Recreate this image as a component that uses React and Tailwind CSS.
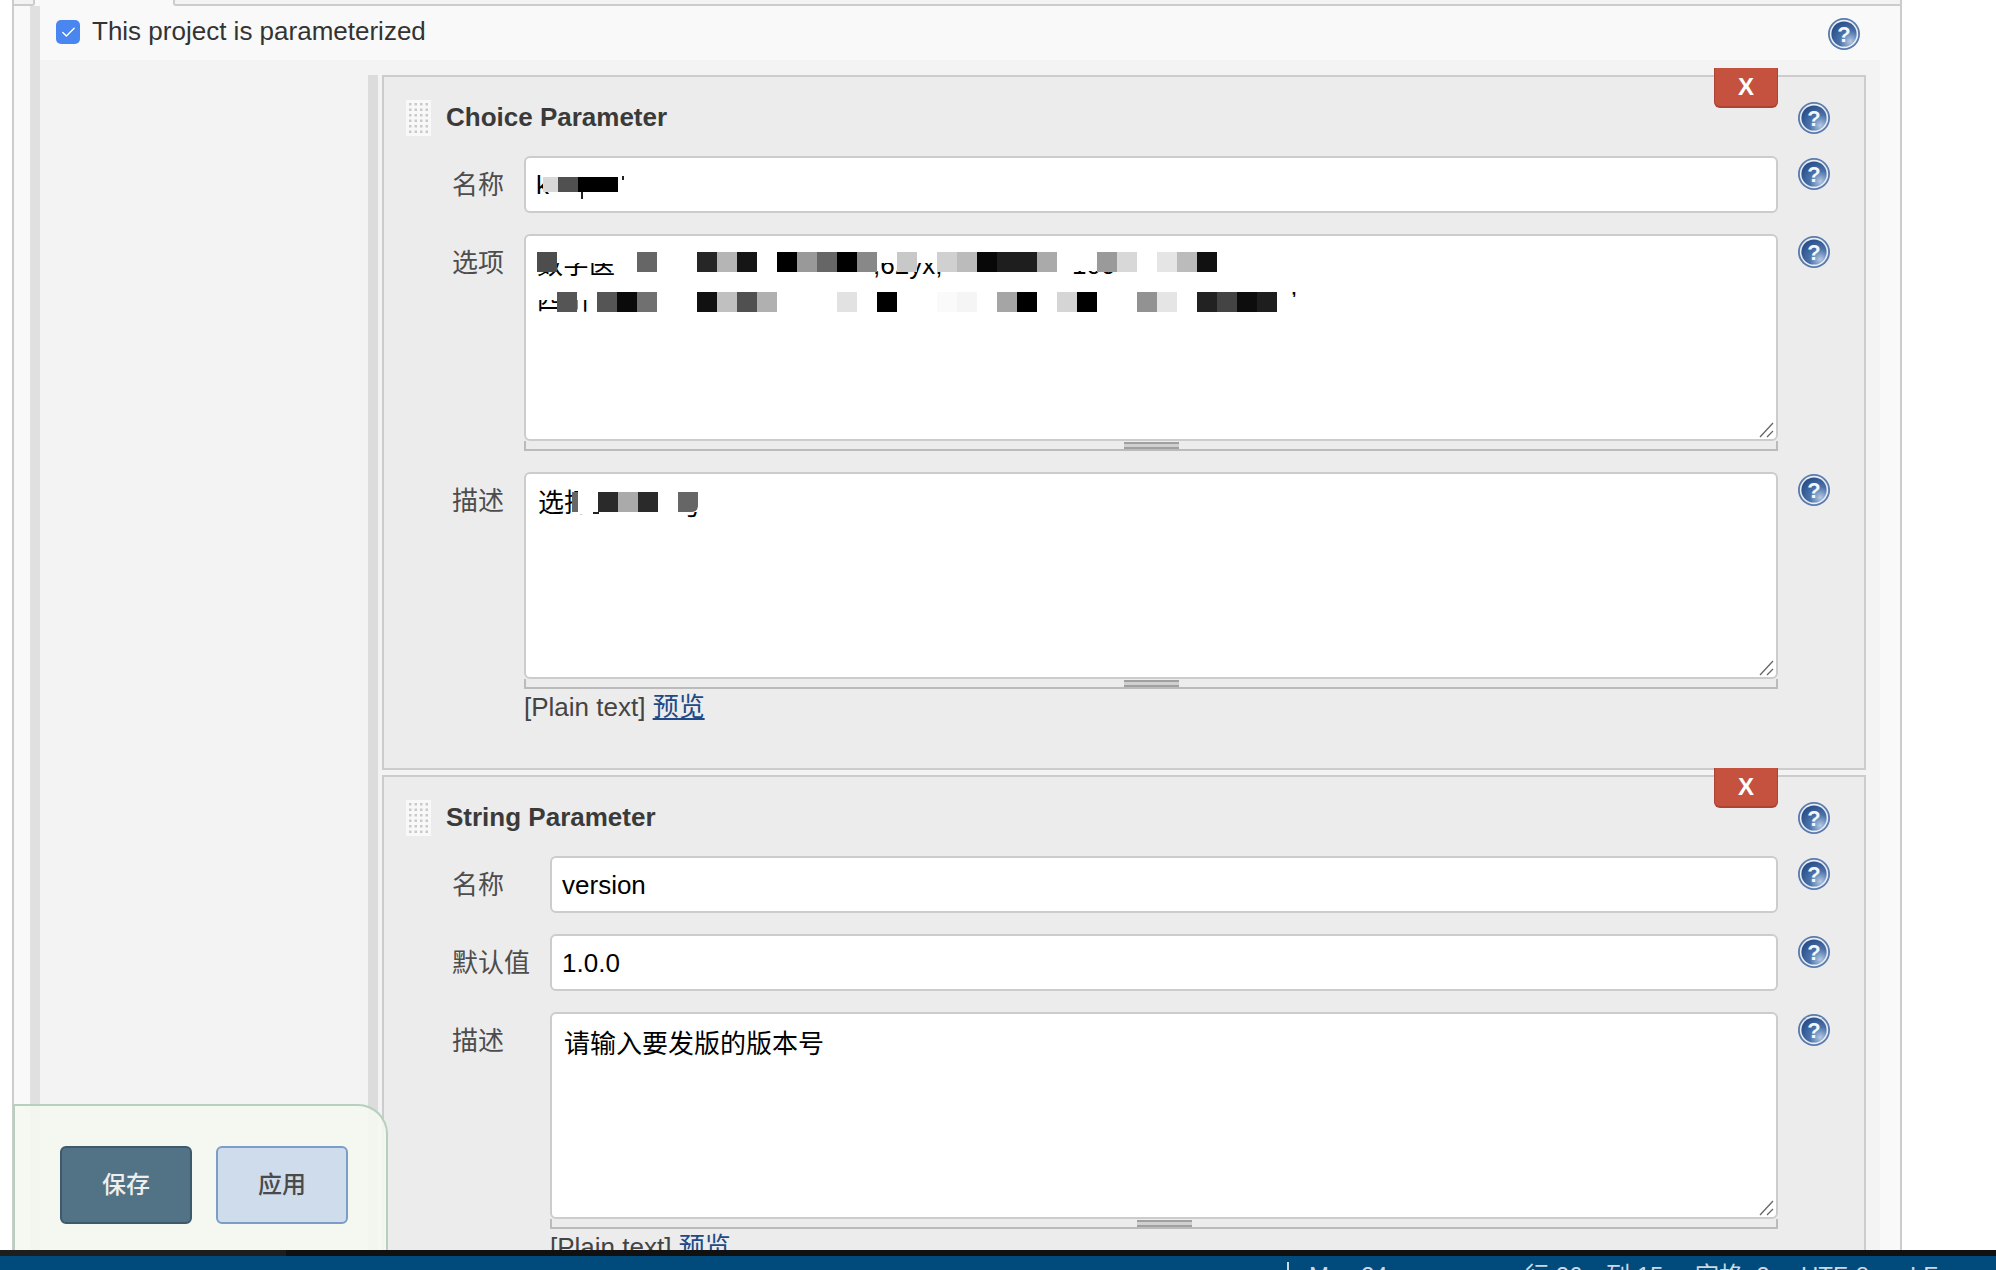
import { Check } from 'lucide-react';

const row1 = [
  [0, '#4d4d4d'], [5, '#666666'], [8, '#262626'], [9, '#b5b5b5'], [10, '#151515'], [12, '#000000'], [13, '#999999'],
  [14, '#666666'], [15, '#000000'], [16, '#888888'], [18, '#c8c8c8'], [20, '#d0d0d0'], [21, '#bbbbbb'], [22, '#080808'],
  [23, '#1e1e1e'], [24, '#1e1e1e'], [25, '#aaaaaa'], [28, '#9a9a9a'], [29, '#d8d8d8'], [31, '#e5e5e5'], [32, '#bbbbbb'], [33, '#111111'],
];
const row2 = [
  [1, '#555555'], [3, '#555555'], [4, '#0a0a0a'], [5, '#707070'], [8, '#111111'], [9, '#c0c0c0'], [10, '#505050'], [11, '#b0b0b0'],
  [15, '#e2e2e2'], [17, '#000000'], [20, '#fafafa'], [21, '#f5f5f5'], [23, '#a5a5a5'], [24, '#000000'], [26, '#d5d5d5'], [27, '#000000'],
  [30, '#929292'], [31, '#e5e5e5'], [33, '#222222'], [34, '#444444'], [35, '#0d0d0d'], [36, '#1e1e1e'],
];

// coordinates are relative to the field that holds the mosaic
const optionCells = [
  ...row1.map(([c, color]) => ({ x: 13 + c * 20, y: 18, w: 20, h: 20, color })),
  ...row2.map(([c, color]) => ({ x: 13 + c * 20, y: 58, w: 20, h: 20, color })),
];
const optionText = [
  { x: 13, top: 29, height: 16, lineTop: 16, text: '数字医' },
  { x: 349, top: 29, height: 16, lineTop: 16, text: ',62yx,' },
  { x: 548, top: 37, height: 8, lineTop: 16, text: '100' },
  { x: 13, top: 66, height: 14, lineTop: 52, text: '四川' },
  { x: 767, top: 56, height: 7, lineTop: 52, text: '\u2019' },
];
const descCells = [
  { x: 54, y: 14, w: 20, h: 28, color: '#ffffff' },
  { x: 48, y: 20, w: 6, h: 20, color: '#666666' },
  { x: 69, y: 40, w: 6, h: 2, color: '#222222' },
  { x: 74, y: 20, w: 20, h: 20, color: '#2a2a2a' },
  { x: 94, y: 20, w: 20, h: 20, color: '#aaaaaa' },
  { x: 114, y: 20, w: 20, h: 20, color: '#2a2a2a' },
  { x: 154, y: 20, w: 20, h: 20, color: '#666666', round: true },
];
const descText = [
  { x: 14, top: 14, height: 30, lineTop: 16, text: '选择' },
  { x: 152, top: 40, height: 7, lineTop: 19, text: '号' },
];
const nameCells = [
  { x: 19, y: 21, w: 15, h: 15, color: '#d8d8d8' },
  { x: 34, y: 21, w: 20, h: 15, color: '#505050' },
  { x: 54, y: 21, w: 40, h: 15, color: '#000000' },
  { x: 57, y: 36, w: 2, h: 7, color: '#222222' },
  { x: 98, y: 20, w: 2, h: 4, color: '#222222' },
];

function HelpIcon() {
  return (
    <svg width="32" height="32" viewBox="0 0 32 32" className="block">
      <defs>
        <radialGradient id="helpFill" cx="0.75" cy="0.8" r="0.85">
          <stop offset="0" stopColor="#b4c8e2" />
          <stop offset="0.5" stopColor="#4a72aa" />
          <stop offset="1" stopColor="#2a4f8a" />
        </radialGradient>
      </defs>
      <circle cx="16" cy="16" r="16" fill="#5a7aad" />
      <circle cx="16" cy="16" r="14.2" fill="#e8eef6" />
      <circle cx="16" cy="16" r="12.6" fill="url(#helpFill)" />
      <text x="16" y="23.5" textAnchor="middle" fontSize="22" fontWeight="700" fill="#f4f7fb" fontFamily="Liberation Sans, sans-serif">?</text>
    </svg>
  );
}

function DragHandle() {
  const dots = [];
  for (let r = 0; r < 6; r++) {
    for (let c = 0; c < 4; c++) {
      dots.push(<rect key={`${r}-${c}`} x={3 + c * 5.5} y={3 + r * 5.5} width="2.5" height="2.5" fill="#c9c9c9" />);
    }
  }
  return (
    <svg width="25" height="36" className="block">
      <rect width="25" height="36" fill="#f8f8f8" />
      {dots}
    </svg>
  );
}

function Mosaic({ cells, text = [] }) {
  return (
    <div className="absolute inset-0 pointer-events-none text-[26px] text-black">
      {text.map((t) => (
        <div key={t.text} className="absolute overflow-hidden whitespace-nowrap" style={{ left: t.x, top: t.top, height: t.height }}>
          <div className="leading-[30px]" style={{ marginTop: t.lineTop - t.top }}>{t.text}</div>
        </div>
      ))}
      {cells.map((c) => (
        <div
          key={`${c.x}-${c.y}`}
          className={c.round ? 'absolute rounded-br-[6px]' : 'absolute'}
          style={{ left: c.x, top: c.y, width: c.w, height: c.h, backgroundColor: c.color }}
        />
      ))}
    </div>
  );
}

function Label({ children }) {
  return <div className="pt-[13px] text-[26px] leading-[33px] text-[#4d4d4d] whitespace-nowrap">{children}</div>;
}

function Help() {
  return <div className="pt-[2px]"><HelpIcon /></div>;
}

function TextInput({ value, children }) {
  return (
    <div className="relative">
      <input
        readOnly
        value={value}
        className="block w-full h-[57px] px-[10px] pt-[2px] bg-white border-2 border-[#cccccc] rounded-[6px] text-[26px] text-black outline-none"
      />
      {children}
    </div>
  );
}

function TextArea({ value = '', children }) {
  return (
    <div>
      <div className="relative">
        <textarea
          readOnly
          value={value}
          className="block w-full h-[207px] px-[12px] py-[11px] bg-white border-2 border-[#cccccc] rounded-[6px] text-[26px] leading-[38px] text-black outline-none resize-none"
        />
        {children}
        <svg width="16" height="16" className="absolute right-[3px] bottom-[3px]">
          <path d="M14 1 L1 15 M14 9 L8 15" stroke="#666666" strokeWidth="1.3" fill="none" />
        </svg>
      </div>
      <div className="h-[10px] flex justify-center bg-[#ececec] border-x-2 border-b-2 border-[#bbbbbb]">
        <div className="w-[55px] h-[7px] mt-[1px] border-y-2 border-[#a0a0a0] bg-[#d0d0d0]" />
      </div>
    </div>
  );
}

function Preview() {
  return (
    <div className="mt-[3px] text-[26px] leading-[30px] text-[#444444]">
      [Plain text] <a className="text-[#204a87] underline">预览</a>
    </div>
  );
}

function Panel({ title, children, className }) {
  return (
    <div className={`relative border-2 border-[#cccccc] bg-[#ececec] ${className}`}>
      <button className="absolute right-[86px] -top-[9px] w-[64px] h-[40px] bg-[#c4523f] border-x border-b-2 border-[#ad4433] rounded-b-[6px] text-white text-[24px] font-bold">
        X
      </button>
      <div className="flex items-center h-[32px] mt-[25px] ml-[22px] mr-[34px]">
        <DragHandle />
        <h3 className="ml-[15px] -mt-[2px] flex-1 text-[26px] font-bold text-[#3a3a3a]">{title}</h3>
        <HelpIcon />
      </div>
      <div className="grid grid-cols-[auto_1fr_32px] gap-x-[20px] gap-y-[21px] mt-[22px] pl-[68px] pr-[34px]">
        {children}
      </div>
    </div>
  );
}

export default function App() {
  return (
    <div className="relative flex flex-col w-[1996px] h-[1270px] overflow-hidden bg-white font-['Liberation_Sans','Noto_Sans_CJK_SC',sans-serif]">
      <div className="h-[1250px] overflow-hidden pl-[12px] pr-[94px]">
        <div className="h-full border-x-2 border-[#cccccc] bg-[#f9f9f9]">
          {/* Tab strip */}
          <div className="flex h-[6px]">
            <div className="w-[21px] border-b-2 border-r-2 border-[#cccccc] rounded-br-[3px] bg-[#f3f3f3]" />
            <div className="w-[138px]" />
            <div className="flex-1 border-b-2 border-l-2 border-[#cccccc] rounded-bl-[3px] bg-[#f3f3f3]" />
          </div>

          <div className="ml-[16px] border-l-[10px] border-[#e0e0e0]">
            <div className="flex justify-between h-[54px] pt-[12px] pr-[40px]">
              <label className="flex items-start text-[26px] leading-[26px] text-[#333333]">
                <span className="flex items-center justify-center w-[24px] h-[24px] mt-[2px] ml-[16px] rounded-[5px] bg-[#4a86f0]">
                  <Check size={17} strokeWidth={2} className="text-white" />
                </span>
                <span className="ml-[12px]">This project is parameterized</span>
              </label>
              <HelpIcon />
            </div>

            <div className="mr-[20px] h-[1300px] pt-[15px] pl-[328px] pr-[14px] bg-[#f3f3f3]">
              <div className="border-l-[10px] border-[#dcdcdc] pl-[4px]">
                <Panel title="Choice Parameter" className="h-[695px]">
                  <Label>名称</Label>
                  <TextInput value="k">
                    <Mosaic cells={nameCells} />
                  </TextInput>
                  <Help />

                  <Label>选项</Label>
                  <TextArea>
                    <Mosaic cells={optionCells} text={optionText} />
                  </TextArea>
                  <Help />

                  <Label>描述</Label>
                  <div>
                    <TextArea>
                      <Mosaic cells={descCells} text={descText} />
                    </TextArea>
                    <Preview />
                  </div>
                  <Help />
                </Panel>

                <Panel title="String Parameter" className="mt-[5px]">
                  <Label>名称</Label>
                  <TextInput value="version" />
                  <Help />

                  <Label>默认值</Label>
                  <TextInput value="1.0.0" />
                  <Help />

                  <Label>描述</Label>
                  <div>
                    <TextArea value="请输入要发版的版本号" />
                    <Preview />
                  </div>
                  <Help />
                </Panel>
              </div>
            </div>
          </div>
        </div>
      </div>

      {/* Bottom bar stays over the form */}
      <div className="absolute left-[13px] top-[1104px] w-[375px] h-[146px] border-x-2 border-t-2 border-[#b7cfbd] rounded-tr-[30px] bg-[#f5f8f0]/90">
        <div className="flex gap-[24px] pt-[40px] pl-[45px]">
          <button className="w-[132px] h-[78px] rounded-[6px] border-2 border-[#3d5a6b] bg-[#527385] text-[24px] font-medium text-[#eeeeee]">保存</button>
          <button className="w-[132px] h-[78px] rounded-[6px] border-2 border-[#7a9dc9] bg-[#cfdcec] text-[24px] font-medium text-[#4a4a4a]">应用</button>
        </div>
      </div>

      {/* Editor window edge */}
      <div className="flex h-[6px] bg-[#111111]">
        <div className="w-[286px] bg-[#1e1e1e]" />
      </div>
      <div className="flex h-[14px] overflow-hidden bg-[#004a7c] pt-[6px] pl-[1287px] text-[24px] leading-[28px] text-[#ccd8e2] whitespace-nowrap">
        <span className="border-l-2 border-[#ccd8e2] pl-[20px] w-[238px]">Mac 24</span>
        <span className="w-[81px]">行 26</span>
        <span className="w-[89px]">列 15</span>
        <span className="w-[106px]">空格: 2</span>
        <span className="w-[109px]">UTF-8</span>
        <span>LF</span>
      </div>
    </div>
  );
}
